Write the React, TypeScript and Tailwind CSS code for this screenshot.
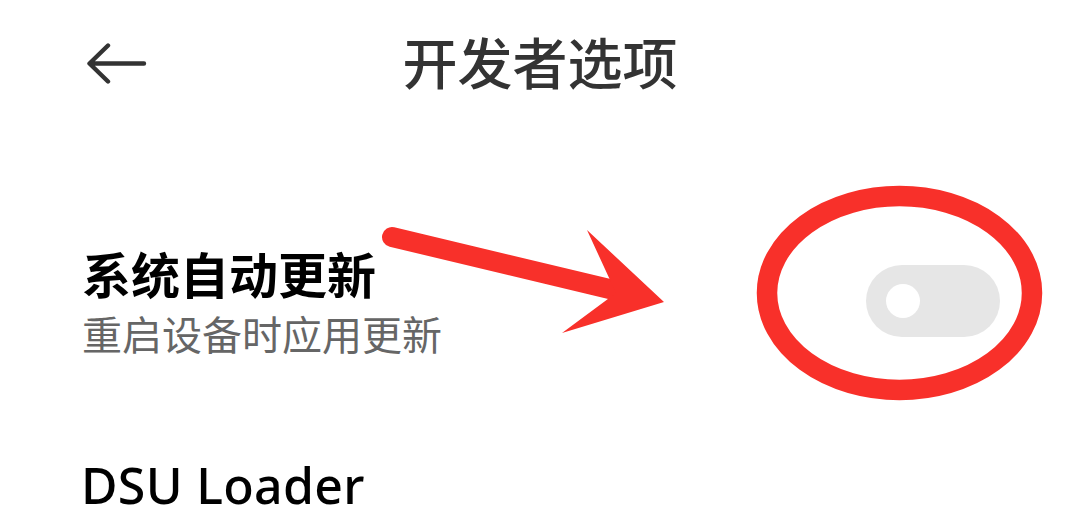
import React from "react";

export default function App() {
  return (
    <div
      className="relative h-[523px] w-[1080px] overflow-hidden bg-white"
      style={{ fontFamily: '"Noto Sans", "Noto Sans CJK SC", sans-serif' }}
    >
      {/* header */}
      <div className="grid h-[132px] grid-cols-[1fr_auto_1fr] items-center">
        <div className="pb-[4px] pl-[86px]">
          <svg width="62" height="42" viewBox="0 0 62 42" className="block">
            <path
              d="M58 20.5 H4 M22 2.5 L3.5 20.5 L22 38.5"
              fill="none"
              stroke="#333333"
              strokeWidth="4.4"
              strokeLinecap="round"
              strokeLinejoin="round"
            />
          </svg>
        </div>
        <div
          className="pb-[12px] text-[55px] font-medium leading-none text-[#333333]"
          style={{ fontFamily: '"Noto Sans CJK SC", sans-serif' }}
        >
          开发者选项
        </div>
        <div />
      </div>

      {/* row: 系统自动更新 */}
      <div className="mt-[111px] flex items-center justify-between pl-[82px] pr-[80px]">
        <div style={{ fontFamily: '"Noto Sans CJK SC", sans-serif' }}>
          <div className="text-[49px] font-bold leading-[60px] text-black">系统自动更新</div>
          <div className="mt-[4px] text-[40px] leading-[52px] text-[#666666]">重启设备时应用更新</div>
        </div>
        <div className="flex h-[72px] w-[134px] items-center rounded-full bg-[#e6e6e6] pl-[20px]">
          <div className="h-[34px] w-[34px] rounded-full bg-white" />
        </div>
      </div>

      {/* DSU Loader */}
      <div className="mt-[101px] pl-[81px] text-[50px] font-medium leading-none tracking-[0.3px] text-black">
        DSU Loader
      </div>

      {/* red annotation overlay */}
      <svg
        className="pointer-events-none absolute left-0 top-0"
        width="1080"
        height="523"
        viewBox="0 0 1080 523"
      >
        <ellipse cx="899.5" cy="293" rx="132.5" ry="97" fill="none" stroke="#f8302a" strokeWidth="20.5" />
        <line x1="392" y1="237" x2="622" y2="292" stroke="#f8302a" strokeWidth="20" strokeLinecap="round" />
        <polygon points="587,230 664,302 562,333 616,293" fill="#f8302a" />
      </svg>
    </div>
  );
}
